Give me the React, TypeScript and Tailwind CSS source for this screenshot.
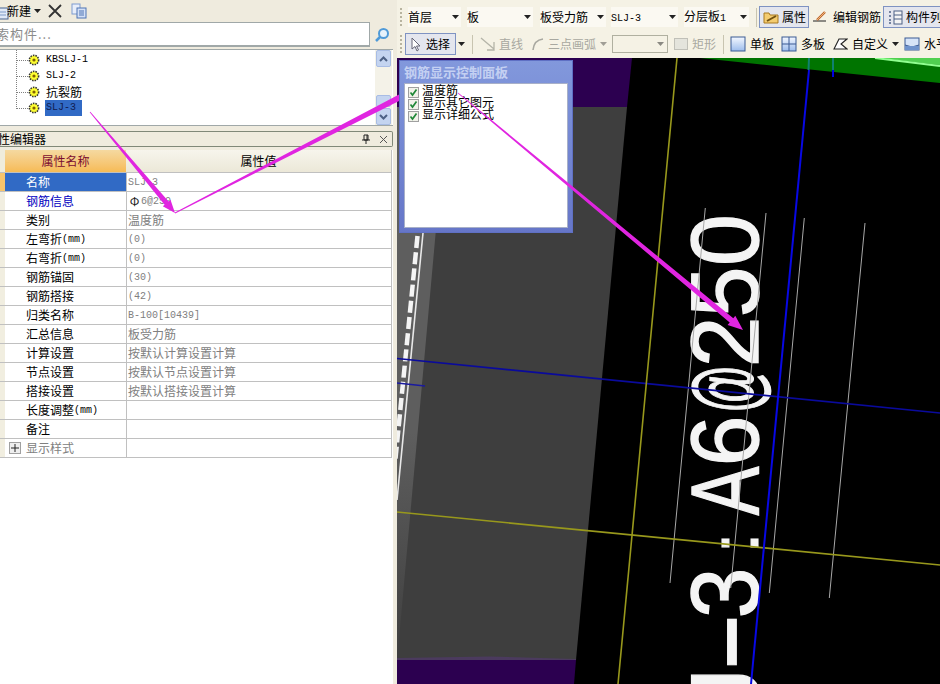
import React from "react";

function arrow(x1: number, y1: number, x2: number, y2: number, w0: number, w1: number, hl: number, hw: number) {
  const L = Math.hypot(x2 - x1, y2 - y1);
  const dx = (x2 - x1) / L, dy = (y2 - y1) / L;
  const nx = -dy, ny = dx;
  const bx = x2 - dx * hl, by = y2 - dy * hl;
  const p = (x: number, y: number) => `${x.toFixed(1)},${y.toFixed(1)}`;
  return [
    p(x1 + nx * w0, y1 + ny * w0), p(bx + nx * w1, by + ny * w1), p(bx + nx * hw, by + ny * hw), p(x2, y2),
    p(bx - nx * hw, by - ny * hw), p(bx - nx * w1, by - ny * w1), p(x1 - nx * w0, y1 - ny * w0),
  ].join(" ");
}

const Lat = ({ children, className = "" }: { children: React.ReactNode; className?: string }) => (
  <span className={`font-['Liberation_Mono',monospace] text-[10px] ${className}`}>{children}</span>
);

const Caret = ({ className = "" }: { className?: string }) => (
  <svg width="7" height="4" viewBox="0 0 7 4" className={`shrink-0 ${className}`}><path d="M0 0h7L3.5 4z" fill="#222" /></svg>
);

const Grip = () => (
  <div className="w-[3px] h-[18px] shrink-0 border-l-2 border-dotted border-[#b8b4a0]" />
);

const Sep = () => <div className="w-px h-[19px] bg-[#c8c4b0] shrink-0" />;

const Combo = ({ w, children }: { w: number; children: React.ReactNode }) => (
  <div style={{ width: w }} className="h-[20px] flex items-center justify-between pr-[2px] shrink-0 bg-[#fbf9f2]">
    <span className="leading-none whitespace-nowrap">{children}</span>
    <Caret />
  </div>
);

const TreeIcon = () => (
  <svg width="12" height="12" viewBox="0 0 12 12" className="shrink-0">
    <circle cx="6" cy="6" r="4.6" fill="#ffff30" stroke="#333" strokeWidth="1.6" strokeDasharray="1.5 1" />
    <circle cx="6" cy="6" r="1.6" fill="#806000" />
  </svg>
);

const TreeRow = ({ label, selected }: { label: React.ReactNode; selected?: boolean }) => (
  <div className="h-[16px] flex items-center relative">
    <div className="w-[12px] ml-[16px] border-t border-dotted border-[#808080] shrink-0" />
    <TreeIcon />
    <span className={`ml-[5px] h-[16px] w-[37px] pl-px flex items-center whitespace-nowrap leading-none ${selected ? "bg-[#316ac5] text-[#101c50]" : "text-black"}`}>{label}</span>
  </div>
);

const rows: { name: React.ReactNode; value?: React.ReactNode; kind?: string }[] = [
  { name: "名称", value: <Lat>SLJ-3</Lat>, kind: "sel" },
  { name: "钢筋信息", value: <><span className="text-[#222] w-[13px] text-center">Φ</span><Lat>6@250</Lat></>, kind: "blue" },
  { name: "类别", value: "温度筋" },
  { name: <>左弯折<Lat>(mm)</Lat></>, value: <Lat>(0)</Lat> },
  { name: <>右弯折<Lat>(mm)</Lat></>, value: <Lat>(0)</Lat> },
  { name: "钢筋锚固", value: <Lat>(30)</Lat> },
  { name: "钢筋搭接", value: <Lat>(42)</Lat> },
  { name: "归类名称", value: <Lat>B-100[10439]</Lat> },
  { name: "汇总信息", value: "板受力筋" },
  { name: "计算设置", value: "按默认计算设置计算" },
  { name: "节点设置", value: "按默认节点设置计算" },
  { name: "搭接设置", value: "按默认搭接设置计算" },
  { name: <>长度调整<Lat>(mm)</Lat></> },
  { name: "备注" },
  { name: "显示样式", kind: "plus" },
];

const PropRow = ({ r }: { r: (typeof rows)[number] }) => (
  <div className="grid grid-cols-[5px_121px_1fr] h-[19px] border-b border-[#c0c0c0]">
    <div className={r.kind === "sel" ? "bg-[#f7c46c]" : "bg-[#f1eee0]"} />
    <div className={`relative pl-[21px] flex items-center whitespace-nowrap ${r.kind === "sel" ? "bg-[#316ac5] text-white" : r.kind === "blue" ? "text-[#0000c0]" : r.kind === "plus" ? "text-[#808080]" : "text-black"}`}>
      {r.kind === "plus" && (
        <span className="absolute left-[4px] top-[3px] w-[12px] h-[12px] border border-[#a0a0a0] bg-[#eeeeee]">
          <svg width="10" height="10" viewBox="0 0 10 10"><path d="M1 5h8M5 1v8" stroke="#222" strokeWidth="1" /></svg>
        </span>
      )}
      {r.name}
    </div>
    <div className="border-l border-[#c0c0c0] pl-px flex items-center text-[#808080] whitespace-nowrap">{r.value}</div>
  </div>
);

const Hot = ({ children, w }: { children: React.ReactNode; w: number }) => (
  <div style={{ width: w }} className="h-[22px] shrink-0 flex items-center gap-[3px] pl-[3px] border border-[#7f93c2] bg-[#e4e6ee] whitespace-nowrap overflow-hidden">{children}</div>
);

const Tool = ({ children, w, grey }: { children: React.ReactNode; w: number; grey?: boolean }) => (
  <div style={{ width: w }} className={`h-[22px] shrink-0 flex items-center gap-[4px] whitespace-nowrap ${grey ? "text-[#a8a8a0]" : "text-black"}`}>{children}</div>
);

const BoardIcon = ({ grid }: { grid?: boolean }) => (
  <svg width="16" height="16" viewBox="0 0 16 16" className="shrink-0">
    <defs><linearGradient id="bd" x1="0" y1="0" x2="0" y2="1"><stop offset="0" stopColor="#f4f8ff" /><stop offset="1" stopColor="#9cbcec" /></linearGradient></defs>
    <rect x="1" y="1" width="14" height="14" fill="url(#bd)" stroke="#3a5a94" />
    {grid && <path d="M8 1v14M1 8h14" stroke="#3a5a94" />}
  </svg>
);

const cadGlyphs: { c: string; y: number; sx: number; sy: number }[] = [
  { c: "J", y: 692, sx: 1, sy: 1 },
  { c: "–", y: 642, sx: 0.85, sy: 1.25 },
  { c: "3", y: 593, sx: 0.95, sy: 1 },
  { c: ":", y: 543, sx: 0.85, sy: 0.72 },
  { c: "A", y: 491, sx: 0.76, sy: 1 },
  { c: "6", y: 441, sx: 0.95, sy: 1 },
  { c: "@", y: 389, sx: 0.5, sy: 0.95 },
  { c: "2", y: 342, sx: 0.95, sy: 1 },
  { c: "5", y: 292, sx: 0.95, sy: 1 },
  { c: "0", y: 240, sx: 0.97, sy: 1 },
];

function Canvas() {
  const thin = [[705.3, 208, 670, 583], [766, 213, 730.7, 588], [804.3, 218, 769.3, 593], [865, 223, 829.3, 598]];
  const dashes = Array.from({ length: 14 }, (_, i) => i);
  return (
    <svg viewBox="397 58 543 626" className="block w-[543px] h-[626px]" preserveAspectRatio="none">
      <defs>
        <linearGradient id="strip" x1="0" y1="0" x2="0" y2="1"><stop offset="0.6" stopColor="#5e5e5e" /><stop offset="1" stopColor="#404040" /></linearGradient>
      </defs>
      <rect x="397" y="58" width="543" height="626" fill="#000" />
      <polygon points="397,58 632,58 627,107 397,107" fill="#2c0050" />
      <polygon points="397,107 627,107 576,660 397,660" fill="#3e3e3e" />
      <polygon points="397,107 447,107 398,650 397,650" fill="url(#strip)" />
      <polygon points="397,660 576,660 574,684 397,684" fill="#2c0050" />
      <polygon points="397,658 490,656.5 576,659 576,660 397,660" fill="#4b3a5e" />
      <polygon points="700,58 940,58 940,83" fill="#007400" />
      <polygon points="880,58 940,58 940,65" fill="#50d050" />
      <path d="M875 58 L940 66" stroke="#90ff90" strokeWidth="2" />
      <path d="M809 58 L808.5 70" stroke="#108070" strokeWidth="2" />
      <path d="M833 58 L833 70" stroke="#108070" strokeWidth="2" />
      <path d="M833 70 L833 77" stroke="#0000e0" strokeWidth="2" />
      {dashes.map((i) => (
        <path key={i} d={`M${417.5 - i * 1.6} ${236 + i * 16.2} l-1.2 12`} stroke="#f4f4f4" strokeWidth="4.5" />
      ))}
      <path d="M423 233 L397 500" stroke="#e8e8e8" strokeWidth="1.6" />
      <g fontFamily="'Liberation Sans', sans-serif" fill="#f4f4f4" stroke="#f4f4f4" strokeWidth="1.4" fontSize="96" textAnchor="middle">
        {cadGlyphs.map((g, i) => (
          <text key={i} transform={`translate(${g.c === "–" ? 763 : 758} ${g.y}) rotate(-90) scale(${g.sx} ${g.sy})`}>{g.c}</text>
        ))}
      </g>
      {thin.map((t, i) => <line key={i} x1={t[0]} y1={t[1]} x2={t[2]} y2={t[3]} stroke="#a8a8a8" strokeWidth="1" />)}
      <path d="M397 358.5 L940 413" stroke="#0a0a9c" strokeWidth="1.6" />
      <path d="M397 383 L425 386" stroke="#1a1aa0" strokeWidth="1.6" />
      <path d="M397 512 L940 565" stroke="#98981c" strokeWidth="1.6" />
      <path d="M677 58 L618 684" stroke="#98981c" strokeWidth="1.6" />
      <path d="M809 70 L751 684" stroke="#0808e4" strokeWidth="2" />
    </svg>
  );
}

const Check = ({ label }: { label: string }) => (
  <div className="h-[12px] flex items-center gap-[3px] text-black whitespace-nowrap">
    <span className="w-[11px] h-[11px] shrink-0 border border-[#a0a0a0] bg-[#f2f2ea]">
      <svg width="9" height="9" viewBox="0 0 9 9"><path d="M1.5 4.5 L3.5 7 L7.5 1.5" stroke="#208838" strokeWidth="1.7" fill="none" /></svg>
    </span>
    <span className="leading-[12px] mb-[4px]">{label}</span>
  </div>
);

export default function App() {
  return (
    <div className="relative w-[940px] h-[684px] overflow-hidden bg-[#efebde] flex text-[12px] font-['Noto_Sans_CJK_SC','Noto_Sans',sans-serif] text-black">
      {/* left pane */}
      <div className="w-[393px] shrink-0 flex flex-col bg-white">
        <div className="bg-[#efebde] pb-[2px]">
          <div className="h-[22px] flex items-center">
            <svg width="10" height="14" viewBox="0 0 10 14" className="shrink-0 mt-[3px]"><rect x="-4" y="2" width="12" height="11" fill="#dfe8f6" stroke="#47628f" /><path d="M-2 6h8M-2 9h8" stroke="#7d9ac8" /></svg>
            <span className="ml-[-3px] text-[12px] leading-none">新建</span>
            <Caret className="ml-[3px]" />
            <svg width="16" height="16" viewBox="0 0 16 16" className="ml-[6px] shrink-0"><path d="M2 2 L14 14 M14 2 L2 14" stroke="#333" strokeWidth="1.8" /></svg>
            <svg width="16" height="16" viewBox="0 0 16 16" className="ml-[8px] shrink-0"><rect x="1" y="1" width="8" height="10" fill="#e8eefa" stroke="#7f9ccf" /><rect x="6" y="5" width="9" height="10" fill="#d4e0f6" stroke="#4f74b4" /><path d="M8 8h5M8 10h5M8 12h5" stroke="#4f74b4" /></svg>
          </div>
          <div className="h-[25px] flex">
            <div className="w-[370px] bg-white border border-l-0 border-[#a0a8a8] border-b-2 text-[#8c8c8c] pl-px flex items-center overflow-hidden whitespace-nowrap text-[13px] tracking-[1px]"><span className="ml-[-5px]">索构件...</span></div>
            <div className="flex-1 flex items-center justify-center">
              <svg width="16" height="16" viewBox="0 0 16 16"><circle cx="9.5" cy="6.5" r="4.5" fill="#e6f2fb" stroke="#4f9ad8" strokeWidth="2" /><path d="M6 10 L2 14" stroke="#4f9ad8" strokeWidth="2.5" /></svg>
            </div>
          </div>
        </div>
        <div className="h-[77px] flex border-y border-[#a0a8a8] bg-white relative">
          <div className="flex-1 pt-[2px] relative">
            <div className="absolute left-[16px] top-0 h-[57px] border-l border-dotted border-[#808080]" />
            <TreeRow label={<Lat>KBSLJ-1</Lat>} />
            <TreeRow label={<Lat>SLJ-2</Lat>} />
            <TreeRow label="抗裂筋" />
            <TreeRow label={<Lat>SLJ-3</Lat>} selected />
          </div>
          <div className="w-[17px] mr-[1px] bg-[#f4f2e8] flex flex-col justify-between items-center">
            <div className="w-[15px] h-[17px] bg-[#c4d4f0] border border-[#a8bce4] rounded-[2px] flex items-center justify-center">
              <svg width="9" height="6" viewBox="0 0 9 6"><path d="M1 5 L4.5 1.5 L8 5" stroke="#4d6185" strokeWidth="2" fill="none" /></svg>
            </div>
            <div className="w-full flex flex-col items-center gap-px">
              <div className="w-[15px] h-[12px] bg-[#c4d4f0] border border-[#a8bce4] rounded-[2px]" />
              <div className="w-[15px] h-[17px] bg-[#c4d4f0] border border-[#a8bce4] rounded-[2px] flex items-center justify-center">
                <svg width="9" height="6" viewBox="0 0 9 6"><path d="M1 1 L4.5 4.5 L8 1" stroke="#4d6185" strokeWidth="2" fill="none" /></svg>
              </div>
            </div>
          </div>
        </div>
        <div className="bg-[#efebde] pt-[5px] pb-[3px]">
          <div className="h-[16px] border border-l-0 border-[#808878] rounded-r-[2px] flex items-center justify-between pr-[4px] text-[12px] overflow-hidden">
            <span className="ml-[-2px] whitespace-nowrap">性编辑器</span>
            <span className="flex items-center gap-[8px]">
              <svg width="10" height="10" viewBox="0 0 10 10"><path d="M3 1h4v5H3zM1 6h8M5 6v4M6 1v5" stroke="#222" fill="none" /></svg>
              <svg width="9" height="9" viewBox="0 0 9 9"><path d="M1 1l7 7M8 1l-7 7" stroke="#555" /></svg>
            </span>
          </div>
        </div>
        <div className="flex-1 bg-white">
          <div className="w-[392px] border-r border-[#c0c0c0] bg-white">
            <div className="grid grid-cols-[5px_121px_1fr] h-[23px] border-b border-[#c0c0c0]">
              <div className="bg-[#efecdc]" />
              <div className="bg-gradient-to-b from-[#f5d9a0] to-[#f6bb55] text-[#7a0c30] flex items-center justify-center text-[12px]">属性名称</div>
              <div className="bg-gradient-to-b from-[#f7f5ec] to-[#ece8d8] flex items-center justify-center">属性值</div>
            </div>
            {rows.map((r, i) => <PropRow key={i} r={r} />)}
          </div>
        </div>
      </div>

      {/* splitter */}
      <div className="w-[4px] shrink-0 bg-[#efebde]" />

      {/* right pane */}
      <div className="flex-1 min-w-0 flex flex-col overflow-hidden">
        <div className="h-[58px] shrink-0 bg-[#f5f2e5] pt-[5px] text-[12px]">
          <div className="h-[24px] flex items-center pl-[3px] whitespace-nowrap">
            <Grip />
            <div className="w-[5px] shrink-0" />
            <Combo w={53}>首层</Combo>
            <div className="w-[6px] shrink-0" />
            <Combo w={66}>板</Combo>
            <div className="w-[7px] shrink-0" />
            <Combo w={66}>板受力筋</Combo>
            <div className="w-[5px] shrink-0" />
            <Combo w={67}><Lat>SLJ-3</Lat></Combo>
            <div className="w-[6px] shrink-0" />
            <Combo w={65}>分层板<Lat>1</Lat></Combo>
            <div className="w-[7px] shrink-0" />
            <Sep />
            <div className="w-[2px] shrink-0" />
            <Hot w={50}>
              <svg width="16" height="14" viewBox="0 0 16 14" className="shrink-0"><path d="M1 3h5l1 2h8v8H1z" fill="#f4cc70" stroke="#a87820" /><path d="M4 11 L13 6" stroke="#705010" strokeWidth="2" /></svg>
              属性
            </Hot>
            <div className="w-[4px] shrink-0" />
            <Tool w={67}>
              <svg width="16" height="14" viewBox="0 0 16 14" className="shrink-0"><path d="M0 11h13" stroke="#222" /><path d="M4 10 L12 2" stroke="#c06028" strokeWidth="2.4" /><path d="M4 10 L12 2" stroke="#f0d090" strokeWidth="0.8" /></svg>
              编辑钢筋
            </Tool>
            <div className="w-[3px] shrink-0" />
            <Hot w={60}>
              <svg width="16" height="15" viewBox="0 0 16 15" className="shrink-0"><path d="M2 2h2M2 6h2M2 10h2M2 13h2" stroke="#4d6185" strokeWidth="1.5" /><rect x="7" y="1" width="8" height="13" fill="#f4f4f4" stroke="#4d6185" /><path d="M7 5h8M7 9h8" stroke="#4d6185" /></svg>
              构件列表
            </Hot>
          </div>
          <div className="h-[24px] mt-[3px] flex items-center pl-[3px] whitespace-nowrap">
            <Grip />
            <div className="w-[2px] shrink-0" />
            <Hot w={51}>
              <svg width="14" height="15" viewBox="0 0 14 15" className="shrink-0"><path d="M3 1 L3 12 L6 9.5 L8 14 L9.5 13 L7.5 9 L11 9 Z" fill="#fff" stroke="#667" /></svg>
              选择
            </Hot>
            <Caret className="ml-[2px]" />
            <div className="w-[7px] shrink-0" />
            <Sep />
            <div className="w-[7px] shrink-0" />
            <Tool w={47} grey>
              <svg width="15" height="14" viewBox="0 0 15 14" className="shrink-0"><path d="M1 1 L14 12 M14 5v8H7" stroke="#b4b4a8" strokeWidth="1.3" fill="none" /></svg>
              直线
            </Tool>
            <div className="w-[4px] shrink-0" />
            <Tool w={74} grey>
              <svg width="13" height="14" viewBox="0 0 13 14" className="shrink-0"><path d="M2 13 Q3 3 12 2" stroke="#a8a8a0" strokeWidth="1.6" fill="none" /></svg>
              三点画弧
              <Caret className="opacity-40" />
            </Tool>
            <div className="w-[7px] shrink-0" />
            <div className="w-[56px] h-[18px] shrink-0 border border-[#b0b0a0] bg-[#f5f2e5] flex items-center justify-end pr-[3px]"><Caret className="opacity-50" /></div>
            <div className="w-[6px] shrink-0" />
            <Tool w={43} grey>
              <span className="w-[14px] h-[12px] border border-[#c0c0b8] bg-[#e4e4dc] shrink-0" />
              矩形
            </Tool>
            <div className="w-[6px] shrink-0" />
            <Sep />
            <div className="w-[6px] shrink-0" />
            <Tool w={48}><BoardIcon />单板</Tool>
            <div className="w-[3px] shrink-0" />
            <Tool w={47}><BoardIcon grid />多板</Tool>
            <div className="w-[5px] shrink-0" />
            <Tool w={66}>
              <svg width="15" height="14" viewBox="0 0 15 14" className="shrink-0"><path d="M1 12 L6 2 L14 2 L8 7 L14 12 Z" fill="#fff" stroke="#222" strokeWidth="1.1" /></svg>
              自定义
              <Caret />
            </Tool>
            <div className="w-[5px] shrink-0" />
            <Tool w={60}>
              <svg width="16" height="16" viewBox="0 0 16 16" className="shrink-0"><rect x="1" y="2" width="14" height="12" fill="#d6e4f8" stroke="#3a5a94" /><path d="M1 9 L8 11 L15 9" stroke="#3a5a94" fill="none" /><rect x="1" y="10" width="14" height="4" fill="#6f93cc" /></svg>
              水平
            </Tool>
          </div>
        </div>
        <div className="flex-1 min-h-0 overflow-hidden">
          <Canvas />
        </div>
      </div>

      {/* arrows drawn over the window, below the floating panel */}
      <svg width="940" height="684" viewBox="0 0 940 684" className="absolute inset-0 pointer-events-none">
        <polygon points={arrow(90, 112, 175, 213, 0.4, 2.6, 13, 5)} fill="#e025e0" />
        <polygon points={arrow(175, 213, 418, 88, 0.4, 3, 15, 6)} fill="#e025e0" />
      </svg>

      {/* floating control panel */}
      <div className="absolute left-[399px] top-[60px] w-[174px] h-[173px] bg-gradient-to-b from-[#8298dc] to-[#6676c8] border border-[#5f70c4] flex flex-col px-[4px] pb-[4px]">
        <div className="h-[22px] flex items-center text-[13px] font-bold text-[#c4d0f2] whitespace-nowrap overflow-hidden">钢筋显示控制面板</div>
        <div className="flex-1 bg-white border border-[#a8b0c8] pl-[3px] pt-[2px]">
          <Check label="温度筋" />
          <Check label="显示其它图元" />
          <Check label="显示详细公式" />
        </div>
      </div>

      <svg width="940" height="684" viewBox="0 0 940 684" className="absolute inset-0 pointer-events-none">
        <polygon points={arrow(458, 93, 743, 330, 0.4, 2.8, 15, 6)} fill="#e025e0" />
      </svg>
    </div>
  );
}
